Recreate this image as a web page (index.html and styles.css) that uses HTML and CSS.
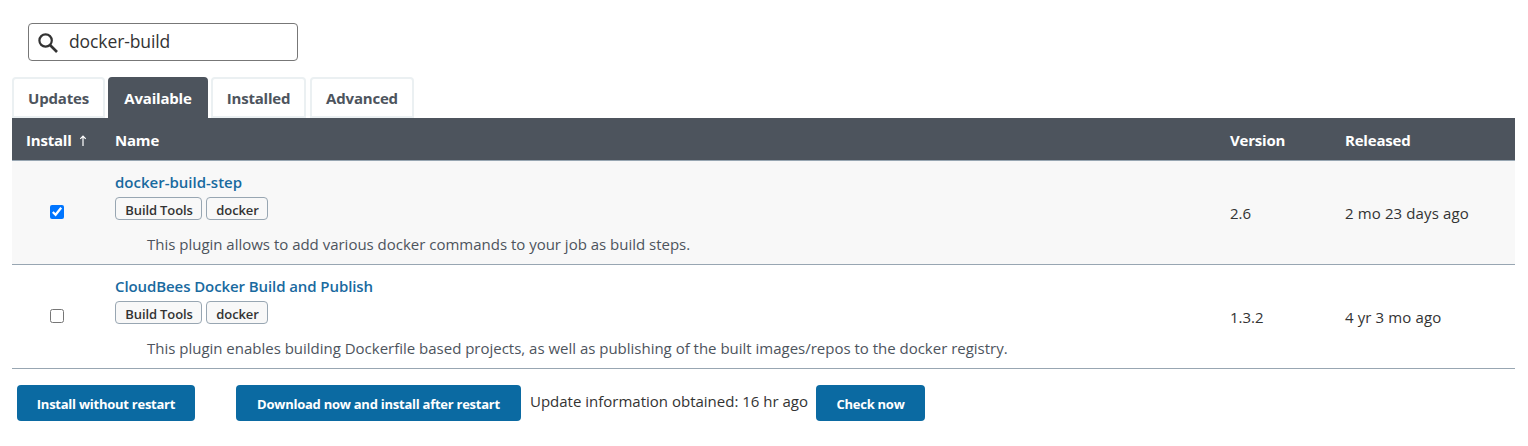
FILE: index.html
```html
<!DOCTYPE html>
<html lang="en">
<head>
<meta charset="utf-8">
<title>Plugin Manager</title>
<link rel="stylesheet" href="styles.css">
</head>
<body>
<label class="search">
  <svg class="search-icon" width="20" height="20" viewBox="0 0 20 20" fill="none" stroke="#333"><circle cx="7.6" cy="7.5" r="6.2" stroke-width="2.2"/><path d="M12 12l7 7" stroke-width="2.6"/></svg>
  <span class="query">docker-build</span>
</label>
<nav class="tabs">
  <a class="tab updates"><span>Updates</span></a>
  <a class="tab available"><span>Available</span></a>
  <a class="tab installed"><span>Installed</span></a>
  <a class="tab advanced"><span>Advanced</span></a>
</nav>
<main class="table">
  <div class="row head">
    <div class="install">Install <svg class="arrow" width="8" height="12" viewBox="0 0 8 12" fill="none" stroke="#fff" stroke-width="1.2"><path d="M4 11V1.5M1.3 3.8L4 1l2.7 2.8"/></svg></div>
    <div>Name</div><div>Version</div><div>Released</div>
  </div>
  <div class="row plugin shaded">
    <div class="check"><input type="checkbox" checked></div>
    <div class="details">
      <a class="name n1">docker-build-step</a>
      <div class="tags"><span class="tag wide">Build Tools</span><span class="tag">docker</span></div>
      <p class="desc">This plugin allows to add various docker commands to your job as build steps.</p>
    </div>
    <div class="cell">2.6</div><div class="cell released">2 mo 23 days ago</div>
  </div>
  <div class="row plugin">
    <div class="check"><input type="checkbox"></div>
    <div class="details">
      <a class="name n2">CloudBees Docker Build and Publish</a>
      <div class="tags"><span class="tag wide">Build Tools</span><span class="tag">docker</span></div>
      <p class="desc">This plugin enables building Dockerfile based projects, as well as publishing of the built images/repos to the docker registry.</p>
    </div>
    <div class="cell">1.3.2</div><div class="cell released">4 yr 3 mo ago</div>
  </div>
</main>
<footer class="actions">
  <button class="btn b1">Install without restart</button>
  <button class="btn b2">Download now and install after restart</button>
  <span class="info">Update information obtained: 16 hr ago</span>
  <button class="btn b3">Check now</button>
</footer>
</body>
</html>
```
FILE: styles.css
```css
* { box-sizing: border-box; }
body { margin: 0; padding: 23px 13px 0 12px; height: 446px; background: #fff; color: #333; font: 15px/22px "Open Sans", "Noto Sans", sans-serif; white-space: nowrap; overflow: hidden; }
.search { display: flex; align-items: center; width: 270px; height: 38px; margin-left: 16px; padding-left: 9px; border: 1px solid #777; border-radius: 4px; gap: 11px; }
.search-icon { margin-top: 2px; }
.query { font-size: 17.5px; letter-spacing: -.1px; margin-top: -2px; }
.tabs { display: flex; height: 41px; margin-top: 16px; }
.tab { display: flex; align-items: center; justify-content: center; border: 2px solid #ebf0f2; border-radius: 4px 4px 0 0; color: #4d545d; font-weight: 700; }
.updates { width: 93px; margin-right: 3px; }
.available { width: 100px; margin-right: 3px; background: #4d545d; border-color: #4d545d; color: #fff; }
.installed { width: 95px; margin-right: 4px; }
.advanced { width: 104px; }
.tab, .head { letter-spacing: -.2px; }
.row { display: grid; grid-template-columns: 103px 1115px 115px 1fr; border-bottom: 1px solid #98a6b2; }
.head { height: 43px; align-items: center; background: #4d545d; color: #fff; font-weight: 700; padding-top: 2px; }
.install { padding-left: 14px; }
.arrow { margin-left: 4px; vertical-align: -1px; }
.plugin { height: 104px; }
.shaded { background: #f8f8f8; }
.check { padding: 44px 0 0 38px; }
.check input { display: block; width: 14px; height: 14px; margin: 0; }
.details { padding-top: 10px; }
.name { display: block; color: #196a9f; font-weight: 600; }
.n2 { letter-spacing: -.09px; }
.tags { display: flex; gap: 4px; margin-top: 4px; }
.tag { width: 62px; height: 23px; padding: 1px 0 0 1px; border: 1px solid #98a6b2; border-radius: 4px; background: #f8f8f8; text-align: center; font-size: 13px; font-weight: 600; letter-spacing: -.12px; }
.wide { width: 87px; }
.desc { margin: 13px 0 0 32px; color: #4d545d; letter-spacing: -.01px; }
.cell { padding-top: 41px; }
.released { letter-spacing: .12px; }
.actions { display: flex; padding: 16px 0 0 5px; }
.btn { height: 36px; padding: 2px 0 0; border: 0; border-radius: 4px; background: #0b6aa2; color: #fff; font: 700 13px "Open Sans", sans-serif; letter-spacing: -.25px; }
.b1 { width: 178px; margin-right: 41px; }
.b2 { width: 285px; margin-right: 9px; }
.b3 { width: 109px; }
.info { width: 286px; padding-top: 5px; }
```
